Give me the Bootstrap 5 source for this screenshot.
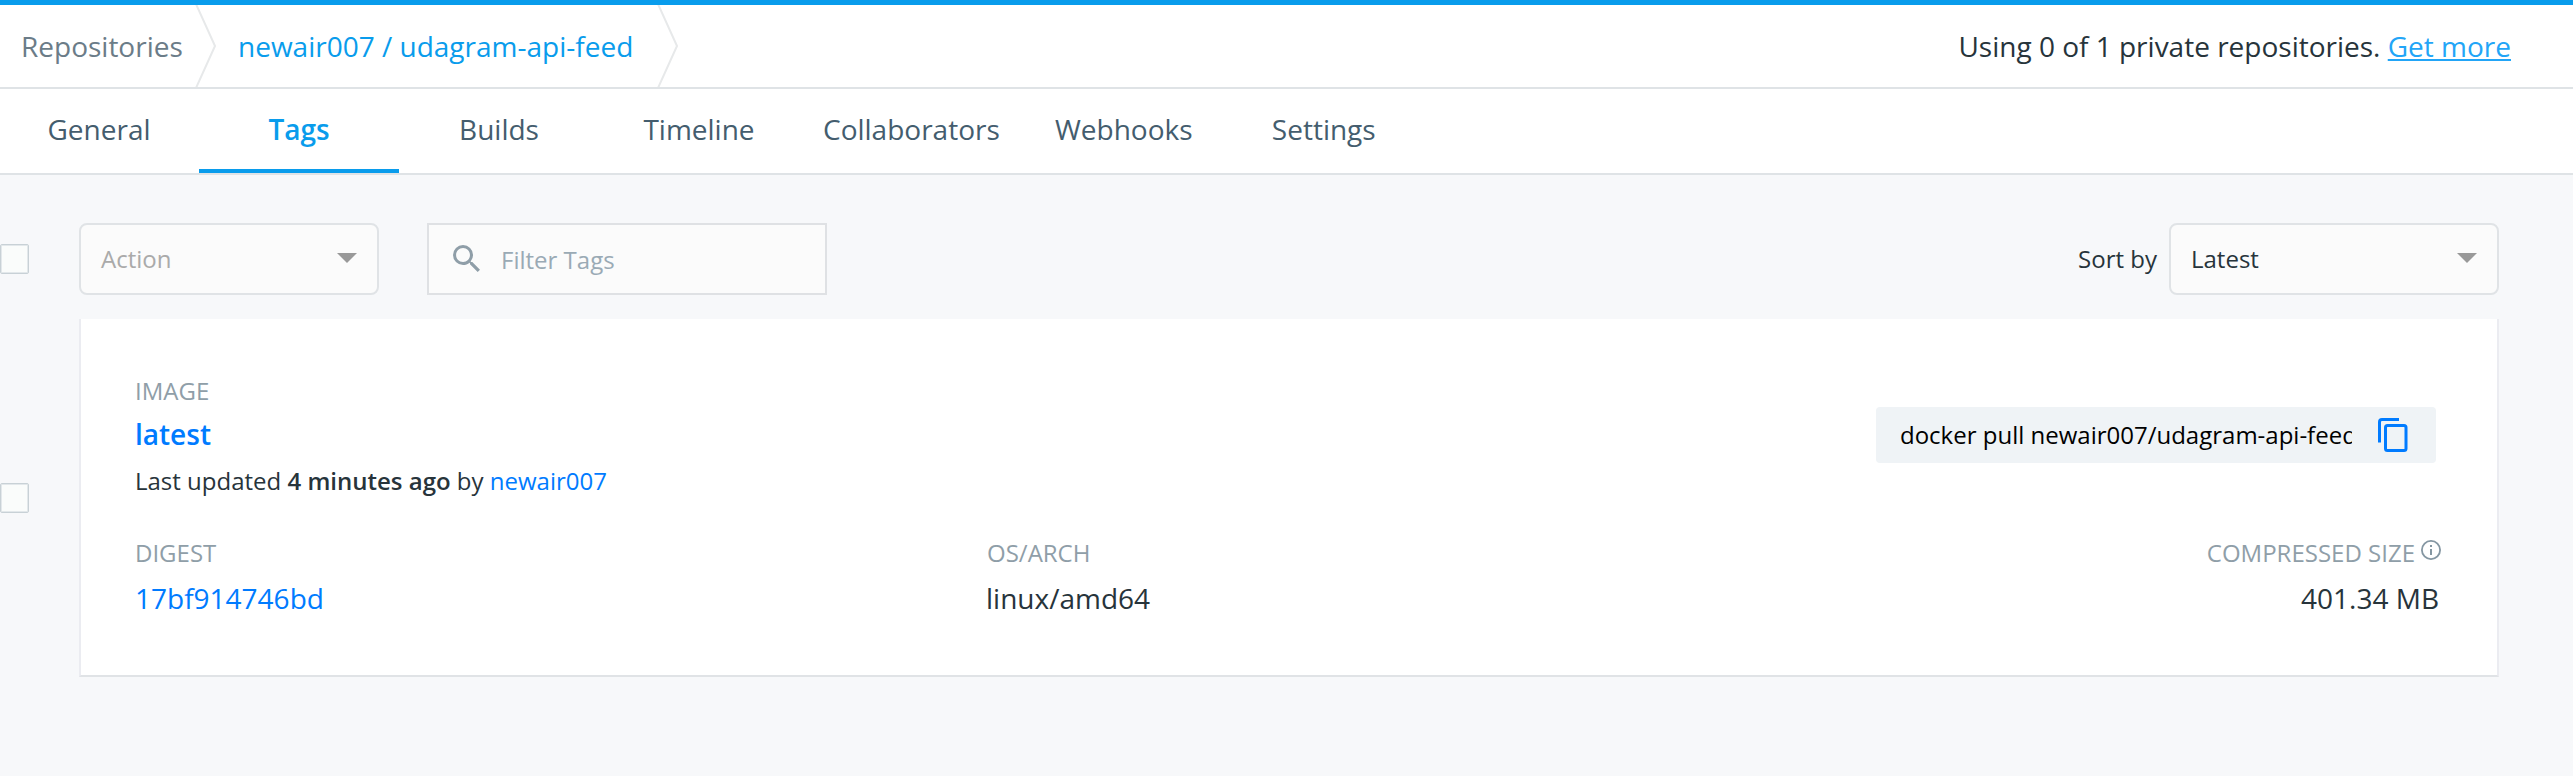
<!DOCTYPE html>
<html lang="en">
<head>
<meta charset="utf-8">
<meta name="viewport" content="width=device-width, initial-scale=1">
<title>newair007 / udagram-api-feed - Tags</title>
<link href="https://cdn.jsdelivr.net/npm/bootstrap@5.3.0/dist/css/bootstrap.min.css" rel="stylesheet">
<style>
  body { font-family: "Open Sans", sans-serif; font-size: 24px; line-height: 32px; color: #27343b; background: #f7f8fa; overflow: hidden; min-height: 776px; }
  a { text-decoration: none; color: #007bff; }
  .crumb-bar { height: 89px; border-top: 5px solid #099cec; border-bottom: 2px solid #dfe3e6; font-size: 28px; padding: 0 62px 0 21px; }
  .crumb-bar .sep { width: 21px; height: 82px; flex: none; }
  .crumb-root { color: #6b7c88; width: 174px; }
  .crumb-repo { color: #099cec; width: 419px; margin-left: 22px; }
  .quota a { color: #22a5f7; text-decoration: underline; text-decoration-thickness: 2px; text-underline-offset: 2px; text-decoration-skip-ink: none; }
  .repo-tabs { height: 86px; border-bottom: 2px solid #dfe3e6; margin-left: -1px; font-size: 28px; }
  .repo-tabs .nav-link { min-width: 200px; padding: 0 24px; line-height: 80px; height: 84px; text-align: center; color: #445d6e; border-radius: 0; border-bottom: 4px solid transparent; }
  .repo-tabs .nav-link.active { color: #099cec; font-weight: 600; border-bottom-color: #099cec; }
  .toolbar { margin-top: 48px; height: 72px; padding-right: 74px; }
  .tick { width: 29px; height: 30px; flex: none; background: #fafcfb; border: 1px solid #c8d1d6; border-radius: 2px; box-shadow: inset 0 0 0 1px #e3e8eb; }
  .picker { height: 72px; border: 2px solid #e0e3e6; border-radius: 8px; background: #fbfbfb; padding: 0 20px; }
  .picker svg { margin-bottom: 2px; }
  .action { width: 300px; margin-left: 50px; color: #aaa; }
  .search { width: 400px; height: 72px; border: 2px solid #dfe1e4; background: #fbfbfb; margin-left: 48px; color: #9aaab5; padding: 2px 0 0 24px; }
  .search svg { margin: -3px 21px 0 0; }
  .sort { width: 330px; margin-left: 12px; }
  .tag-row { margin-top: 24px; }
  .tag-row .tick { margin-top: 164px; }
  .tag-card { width: 2420px; height: 358px; margin-left: 50px; background: #fff; border: 2px solid #ebecf1; border-top: 0; border-bottom-color: #e0e3e6; padding: 56px 59px 0 54px; }
  .label { color: #8f9ea8; line-height: 32px; }
  .tag-name { font-size: 28px; font-weight: 600; line-height: 54px; display: block; }
  .updated { line-height: 40px; }
  .updated b { font-weight: 600; }
  .pull { width: 560px; height: 56px; margin: 32px 2px 0 0; background: #eff3f6; border-radius: 4px; padding: 0 28px 0 24px; color: #000; }
  .pull code { font: inherit; color: inherit; width: 452px; overflow: hidden; white-space: nowrap; line-height: 56px; }
  .details { margin-top: 36px; }
  .val { font-size: 28px; line-height: 58px; }
  .c-digest { width: 851px; }
  .c-arch .label { padding-left: 1px; }
  .c-size { margin-right: -3px; }
  .c-size svg { margin: 3px 0 0 6px; }
  .c-size .val { padding-right: 2px; }
</style>
</head>
<body>
<header class="crumb-bar bg-white d-flex align-items-center">
  <span class="crumb-root">Repositories</span>
  <svg class="sep" viewBox="0 0 21 82" fill="none" stroke="#e7e9ea" stroke-width="2"><path d="M1 -1 20 41 1 83"/></svg>
  <a href="#" class="crumb-repo">newair007 / udagram-api-feed</a>
  <svg class="sep" viewBox="0 0 21 82" fill="none" stroke="#e7e9ea" stroke-width="2"><path d="M1 -1 20 41 1 83"/></svg>
  <span class="quota ms-auto">Using 0 of 1 private repositories. <a href="#">Get more</a></span>
</header>
<nav class="nav repo-tabs bg-white flex-nowrap">
  <a class="nav-link" href="#">General</a>
  <a class="nav-link active" href="#">Tags</a>
  <a class="nav-link" href="#">Builds</a>
  <a class="nav-link" href="#">Timeline</a>
  <a class="nav-link" href="#">Collaborators</a>
  <a class="nav-link" href="#">Webhooks</a>
  <a class="nav-link" href="#">Settings</a>
</nav>
<main>
  <div class="toolbar d-flex align-items-center">
    <span class="tick"></span>
    <div class="picker action d-flex align-items-center justify-content-between">Action
      <svg width="20" height="10"><path d="M0 0H20L10 10Z" fill="#999"/></svg>
    </div>
    <div class="search d-flex align-items-center">
      <svg width="27" height="27" viewBox="3 3 17.5 17.5"><path fill="#8f9ea8" d="M15.5 14h-.79l-.28-.27A6.471 6.471 0 0 0 16 9.500 6.500 6.500 0 1 0 9.500 16c1.610 0 3.090-.59 4.230-1.570l.27.28v.79l5 4.990L20.490 19l-4.990-5zm-6 0C7.010 14 5 11.990 5 9.500S7.010 5 9.500 5 14 7.010 14 9.500 11.990 14 9.500 14z"/></svg>
      Filter Tags
    </div>
    <span class="ms-auto">Sort by</span>
    <div class="picker sort d-flex align-items-center justify-content-between">Latest
      <svg width="20" height="10"><path d="M0 0H20L10 10Z" fill="#999"/></svg>
    </div>
  </div>
  <div class="tag-row d-flex align-items-start">
    <span class="tick"></span>
    <section class="tag-card">
      <div class="d-flex justify-content-between">
        <div>
          <div class="label">IMAGE</div>
          <a href="#" class="tag-name">latest</a>
          <div class="updated">Last updated <b>4 minutes ago</b> by <a href="#">newair007</a></div>
        </div>
        <div class="pull d-flex align-items-center justify-content-between">
          <code>docker pull newair007/udagram-api-feed</code>
          <svg width="32" height="36" viewBox="0 0 32 36" fill="none" stroke="#007bff" stroke-width="3"><path d="M3.500 25.500V5a2.500 2.500 0 0 1 2.500-2.500H23"/><rect x="9.500" y="8.500" width="20.500" height="25" rx="2"/></svg>
        </div>
      </div>
      <div class="details d-flex">
        <div class="c-digest"><div class="label">DIGEST</div><a href="#" class="val">17bf914746bd</a></div>
        <div class="c-arch"><div class="label">OS/ARCH</div><div class="val">linux/amd64</div></div>
        <div class="c-size ms-auto text-end">
          <div class="label d-flex">COMPRESSED SIZE
            <svg width="20" height="20" viewBox="0 0 20 20"><circle cx="10" cy="10" r="9.100" fill="none" stroke="#8496a2" stroke-width="1.800"/><path d="M9 5h2v2H9zM9 9h2v6H9z" fill="#8496a2"/></svg>
          </div>
          <div class="val">401.34 MB</div>
        </div>
      </div>
    </section>
  </div>
</main>
<script src="https://cdn.jsdelivr.net/npm/bootstrap@5.3.0/dist/js/bootstrap.bundle.min.js"></script>
</body>
</html>
